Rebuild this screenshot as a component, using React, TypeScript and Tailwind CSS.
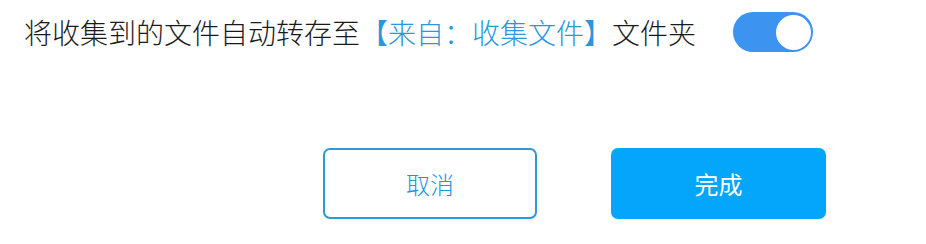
import React from "react";

export default function App() {
  return (
    <div
      className="w-[926px] h-[244px] bg-white overflow-hidden"
      style={{ fontFamily: '"Noto Sans CJK SC", "Noto Sans", sans-serif' }}
    >
      <div className="pt-[12px] pl-[24px] flex items-center">
        <div className="text-[28px] leading-[40px] font-light text-[#1a1a1a] whitespace-nowrap">
          将收集到的文件自动转存至
          <span className="text-[#2a96dd]">【来自：收集文件】</span>
          文件夹
        </div>
        <button className="ml-[37px] w-[80px] h-[40px] rounded-full bg-[#3d93f0] flex items-center justify-end pr-[2px]">
          <span className="w-[35px] h-[35px] rounded-full bg-white block" />
        </button>
      </div>
      <div className="mt-[96px] pl-[323px] flex gap-[74px]">
        <button className="w-[214px] h-[71px] rounded-[7px] border-2 border-[#2a9bd5] bg-white text-[24px] font-light text-[#1b95de] flex items-center justify-center">
          取消
        </button>
        <button className="w-[215px] h-[71px] rounded-[7px] bg-[#03a6fa] text-[24px] font-normal text-white flex items-center justify-center">
          完成
        </button>
      </div>
    </div>
  );
}
